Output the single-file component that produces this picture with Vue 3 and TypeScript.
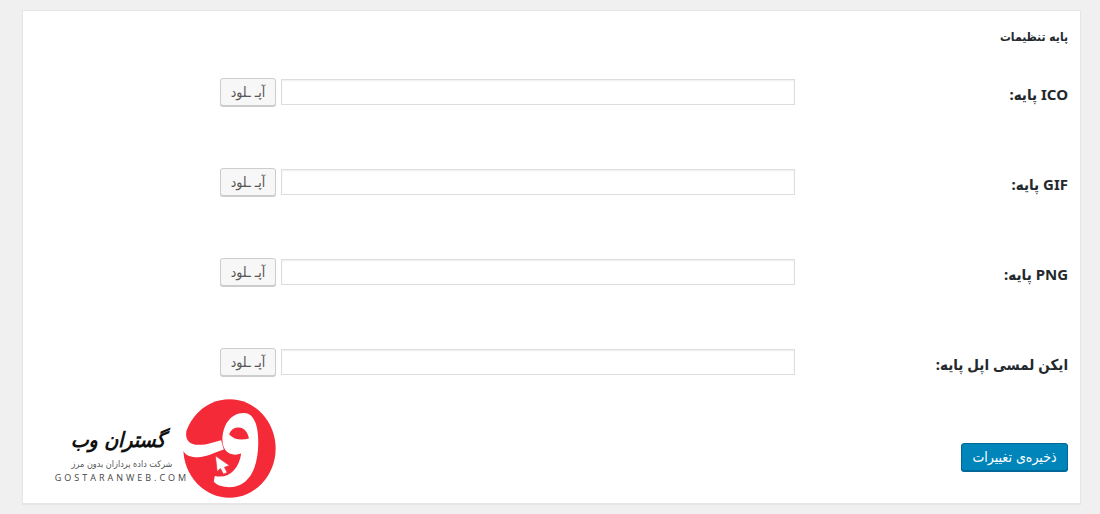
<script setup lang="ts">
import { reactive } from 'vue'

interface IconField {
  id: string
  label: string
  value: string
}

const fields = reactive<IconField[]>([
  { id: 'ico', label: 'ICO پایه:', value: '' },
  { id: 'gif', label: 'GIF پایه:', value: '' },
  { id: 'png', label: 'PNG پایه:', value: '' },
  { id: 'apple', label: 'ایکن لمسی اپل پایه:', value: '' },
])
</script>

<template>
  <main class="page" dir="rtl" lang="fa">
    <form class="card" @submit.prevent>
      <h3 class="title">پایه تنظیمات</h3>
      <div class="rows">
        <div v-for="field in fields" :key="field.id" class="row">
          <label class="label" :for="field.id">{{ field.label }}</label>
          <div class="control">
            <input :id="field.id" v-model="field.value" class="input" type="text" />
            <button class="upload" type="button">آپـ ـلود</button>
          </div>
        </div>
      </div>
      <div class="footer">
        <button class="save" type="submit">ذخیره‌ی تغییرات</button>
        <div class="brand">
          <svg class="mark" viewBox="26 20 278 296" aria-hidden="true">
            <ellipse cx="165" cy="168" rx="138" ry="147" fill="#f52a38" />
            <path
              d="M20 118 L36 118 C32 142 46 156 70 157 C96 158 116 149 140 143 L148 171 C118 181 98 193 70 194 C50 194 36 190 27 176 L20 178 Z"
              fill="#fff"
            />
            <path
              fill-rule="evenodd"
              d="M144 145 C143 102 166 62 208 62 C240 62 251 103 251 150 C251 220 227 284 165 284 C145 284 126 278 118 267 L121 250 C161 260 193 232 200 183 C170 194 145 178 144 145 Z M164 126 C168 112 180 104 193 105 C210 106 220 120 223 138 C202 144 180 143 164 126 Z"
              fill="#fff"
            />
            <path
              d="M123 190 L128 237 L138 228 L147 245 L158 240 L150 224 L165 219 Z"
              fill="#fff"
              stroke="#f52a38"
              stroke-width="2"
            />
          </svg>
          <div class="brand-text">
            <span class="brand-name">گستران وب</span>
            <span class="brand-tagline">شرکت داده پردازان بدون مرز</span>
            <span class="brand-site" dir="ltr">GOSTARANWEB.COM</span>
          </div>
        </div>
      </div>
    </form>
  </main>
</template>

<style>
body {
  background: #f0f0f0;
}
</style>

<style scoped>
.page {
  padding: 10px 19px 10px 22px;
  font-family: 'DejaVu Sans Condensed', 'DejaVu Sans', sans-serif;
  color: #23282d;
}

.card {
  box-sizing: border-box;
  padding: 16px 12px 5px;
  background: #fff;
  border: 1px solid #e5e5e5;
  box-shadow: 0 1px 1px rgba(0, 0, 0, 0.04);
}

.title {
  margin: 0 0 31px;
  font-size: 12px;
  line-height: 20px;
}

.rows {
  display: grid;
  gap: 62px;
}

.row {
  display: flex;
  align-items: center;
  height: 28px;
}

.label {
  flex: 0 0 273px;
  padding-top: 4px;
  font-family: 'Noto Sans', 'DejaVu Sans Condensed', 'DejaVu Sans', sans-serif;
  font-size: 15px;
  font-weight: bold;
  line-height: 20px;
}

.control {
  display: flex;
  flex: 1;
  align-items: center;
  gap: 5px;
  padding-left: 185px;
}

.input {
  box-sizing: border-box;
  flex: 1;
  min-width: 0;
  height: 26px;
  padding: 3px 5px;
  border: 1px solid #ddd;
  border-radius: 0;
  background: #fff;
  box-shadow: inset 0 1px 2px rgba(0, 0, 0, 0.07);
  font: inherit;
  font-size: 14px;
}

.upload,
.save {
  box-sizing: border-box;
  padding: 0;
  border-radius: 3px;
  font-family: inherit;
  font-size: 14px;
  white-space: nowrap;
  cursor: pointer;
}

.upload {
  width: 56px;
  height: 28px;
  border: 1px solid #ccc;
  background: #f7f7f7;
  box-shadow: 0 1px 0 #ccc;
  color: #555;
}

.footer {
  display: flex;
  align-items: flex-start;
  justify-content: space-between;
  margin-top: 23px;
}

.save {
  width: 107px;
  height: 28px;
  margin-top: 44px;
  border: 1px solid #006799;
  background: #0085ba;
  box-shadow: 0 1px 0 #006799;
  color: #fff;
}

.brand {
  display: flex;
  align-items: flex-start;
  margin-left: 21px;
}

.mark {
  display: block;
  width: 93px;
  height: 99px;
}

.brand-text {
  display: flex;
  flex-direction: column;
  align-items: center;
  width: 132px;
  padding-top: 24px;
  margin-right: -5px;
  white-space: nowrap;
}

.brand-name {
  margin-right: 8px;
  color: #111;
  font-size: 21px;
  font-style: italic;
  font-weight: bold;
  line-height: 34px;
}

.brand-tagline {
  color: #555;
  font-size: 9px;
  line-height: 14px;
}

.brand-site {
  color: #444;
  font-family: 'Open Sans', sans-serif;
  font-size: 9px;
  letter-spacing: 3px;
  line-height: 14px;
}
</style>
